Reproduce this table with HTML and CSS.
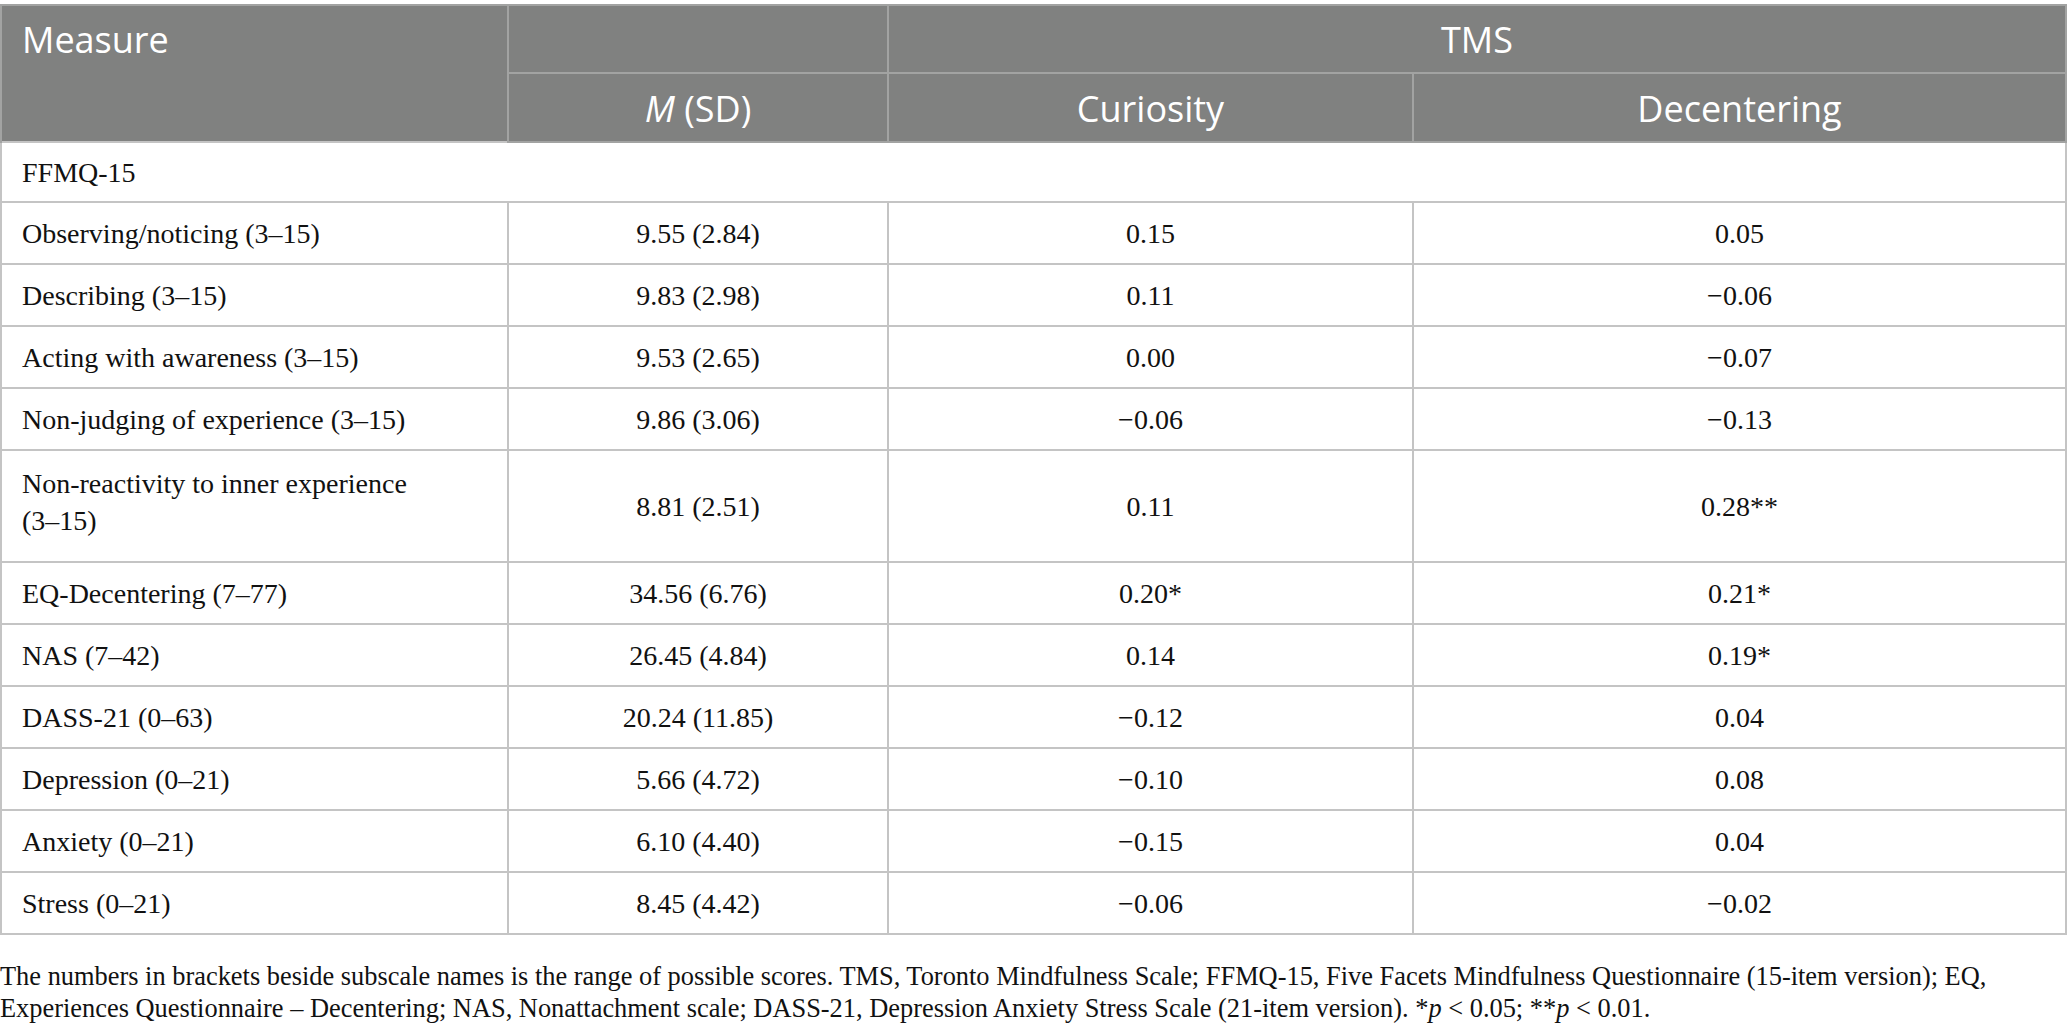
FILE: index.html
```html
<!DOCTYPE html>
<html lang="en">
<head>
    <meta charset="UTF-8">
    <meta name="viewport" content="width=device-width, initial-scale=1.0">
    <title>Table - TMS correlations</title>
    <link rel="stylesheet" href="styles.css">
</head>
<body>
    <!-- Results Table -->
    <table class="data-table">
        <colgroup>
            <col class="col-measure">
            <col class="col-mean">
            <col class="col-curiosity">
            <col class="col-decentering">
        </colgroup>
        <thead>
            <tr class="head-top">
                <th rowspan="2" class="head-measure">Measure</th>
                <th></th>
                <th colspan="2">TMS</th>
            </tr>
            <tr class="head-sub">
                <th><i>M</i> (SD)</th>
                <th>Curiosity</th>
                <th>Decentering</th>
            </tr>
        </thead>
        <tbody>
            <tr class="group-row">
                <td colspan="4">FFMQ-15</td>
            </tr>
            <tr>
                <td>Observing/noticing (3–15)</td>
                <td>9.55 (2.84)</td>
                <td>0.15</td>
                <td>0.05</td>
            </tr>
            <tr>
                <td>Describing (3–15)</td>
                <td>9.83 (2.98)</td>
                <td>0.11</td>
                <td>−0.06</td>
            </tr>
            <tr>
                <td>Acting with awareness (3–15)</td>
                <td>9.53 (2.65)</td>
                <td>0.00</td>
                <td>−0.07</td>
            </tr>
            <tr>
                <td>Non-judging of experience (3–15)</td>
                <td>9.86 (3.06)</td>
                <td>−0.06</td>
                <td>−0.13</td>
            </tr>
            <tr class="tall-row">
                <td>Non-reactivity to inner experience <span class="range">(3–15)</span></td>
                <td>8.81 (2.51)</td>
                <td>0.11</td>
                <td>0.28**</td>
            </tr>
            <tr>
                <td>EQ-Decentering (7–77)</td>
                <td>34.56 (6.76)</td>
                <td>0.20*</td>
                <td>0.21*</td>
            </tr>
            <tr>
                <td>NAS (7–42)</td>
                <td>26.45 (4.84)</td>
                <td>0.14</td>
                <td>0.19*</td>
            </tr>
            <tr>
                <td>DASS-21 (0–63)</td>
                <td>20.24 (11.85)</td>
                <td>−0.12</td>
                <td>0.04</td>
            </tr>
            <tr>
                <td>Depression (0–21)</td>
                <td>5.66 (4.72)</td>
                <td>−0.10</td>
                <td>0.08</td>
            </tr>
            <tr>
                <td>Anxiety (0–21)</td>
                <td>6.10 (4.40)</td>
                <td>−0.15</td>
                <td>0.04</td>
            </tr>
            <tr>
                <td>Stress (0–21)</td>
                <td>8.45 (4.42)</td>
                <td>−0.06</td>
                <td>−0.02</td>
            </tr>
        </tbody>
    </table>

    <!-- Footnote -->
    <p class="table-note">The numbers in brackets beside subscale names is the range of possible scores. TMS, Toronto Mindfulness Scale; FFMQ-15, Five Facets Mindfulness Questionnaire (15-item version); EQ, Experiences Questionnaire – Decentering; NAS, Nonattachment scale; DASS-21, Depression Anxiety Stress Scale (21-item version). *<i>p</i> &lt; 0.05; **<i>p</i> &lt; 0.01.</p>
</body>
</html>
```

FILE: styles.css
```css
/* General Styling */
body {
    margin: 0;
    padding: 4px 0 0 0;
    background: white;
    color: #111;
    font-family: "Liberation Serif", "DejaVu Serif", serif;
}

/* Table */
.data-table {
    width: 2067px;
    border-collapse: collapse;
    table-layout: fixed;
    border: 2px solid #c4c4c4;
}

.col-measure {
    width: 507px;
}

.col-mean {
    width: 380px;
}

.col-curiosity {
    width: 525px;
}

.data-table th {
    background: #808180;
    color: white;
    font-family: "Open Sans", "Noto Sans", sans-serif;
    font-weight: normal;
    font-size: 36px;
    text-align: center;
    border: 2px solid #a2a3a2;
    padding: 0 20px;
}

.data-table .head-measure {
    text-align: left;
    vertical-align: top;
    padding-top: 9px;
    border-right: 2px solid #a2a3a2;
}

.head-top th {
    height: 66px;
    border-bottom: 2px solid #a2a3a2;
}

.head-top th:first-child {
    border-bottom: none;
}

.head-sub th {
    height: 65px;
    padding-top: 2px;
}

.data-table thead {
    border-bottom: 2px solid #c4c4c4;
}

.data-table td {
    height: 60px;
    font-size: 28px;
    line-height: 37px;
    text-align: center;
    border: 2px solid #c4c4c4;
    padding: 0 20px;
}

.data-table td:first-child {
    text-align: left;
}

.group-row td {
    height: 58px;
}

.tall-row td {
    height: 110px;
}

.data-table .tall-row td:first-child {
    height: 102px;
    padding-bottom: 8px;
}

.range {
    white-space: nowrap;
}

/* Footnote */
.table-note {
    margin: 25px 0 0 0;
    font-size: 26.4px;
    line-height: 32px;
    color: #111;
}
```
